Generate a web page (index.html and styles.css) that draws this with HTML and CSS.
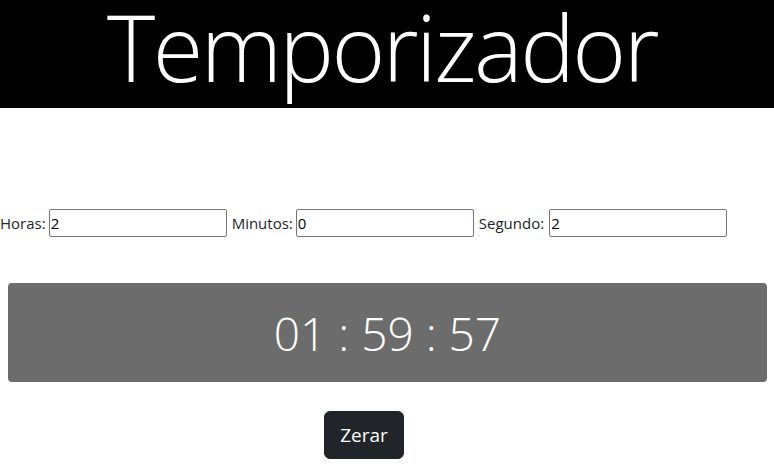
FILE: index.html
```html
<!DOCTYPE html>
<html lang="pt">
<head>
<meta charset="utf-8">
<title>Temporizador</title>
<link rel="stylesheet" href="styles.css">
</head>
<body>
<header class="top">
  <h1 class="title">Temporizador</h1>
</header>
<main>
  <form class="fields">
    <label class="lbl">Horas:</label>
    <input class="inp" type="text" value="2">
    <label class="lbl">Minutos:</label>
    <input class="inp" type="text" value="0">
    <label class="lbl lbl-wide">Segundo:</label>
    <input class="inp" type="text" value="2">
  </form>
  <div class="clock">01 : 59 : 57</div>
  <div class="actions">
    <button class="btn" type="button">Zerar</button>
  </div>
</main>
</body>
</html>
```
FILE: styles.css
```css
* { box-sizing: border-box; }
html, body { margin: 0; padding: 0; background: #fff; }
body {
  font-family: "Open Sans", "Noto Sans", sans-serif;
  color: #212529;
  font-size: 15px;
}
.top {
  background: #000;
  height: 108px;
  display: flex;
  justify-content: center;
  align-items: flex-start;
  padding-right: 10px;
}
.title {
  margin: 0;
  color: #fff;
  font-weight: 300;
  font-size: 92px;
  line-height: 94px;
  letter-spacing: -2.6px;
}
.fields {
  margin-top: 101px;
  display: flex;
  align-items: center;
  height: 28px;
}
.lbl { white-space: nowrap; margin-right: 3px; }
.lbl-wide { margin-right: 5px; }
.inp {
  width: 178px;
  height: 28px;
  border: 1px solid #767676;
  border-radius: 2px;
  padding: 0 1px;
  font-family: inherit;
  font-size: 15px;
  color: #000;
  margin-right: 5px;
}
.clock {
  margin: 46px 7px 0 8px;
  height: 99px;
  background: #6c6c6c;
  border-radius: 4px;
  color: #fff;
  display: flex;
  align-items: center;
  justify-content: center;
  font-size: 46px;
  font-weight: 300;
}
.actions {
  margin-top: 29px;
  padding-left: 324px;
}
.btn {
  background: #212529;
  color: #fff;
  border: 1px solid #212529;
  border-radius: 6px;
  height: 48px;
  width: 80px;
  font-family: inherit;
  font-size: 19px;
  padding: 0;
}
```
